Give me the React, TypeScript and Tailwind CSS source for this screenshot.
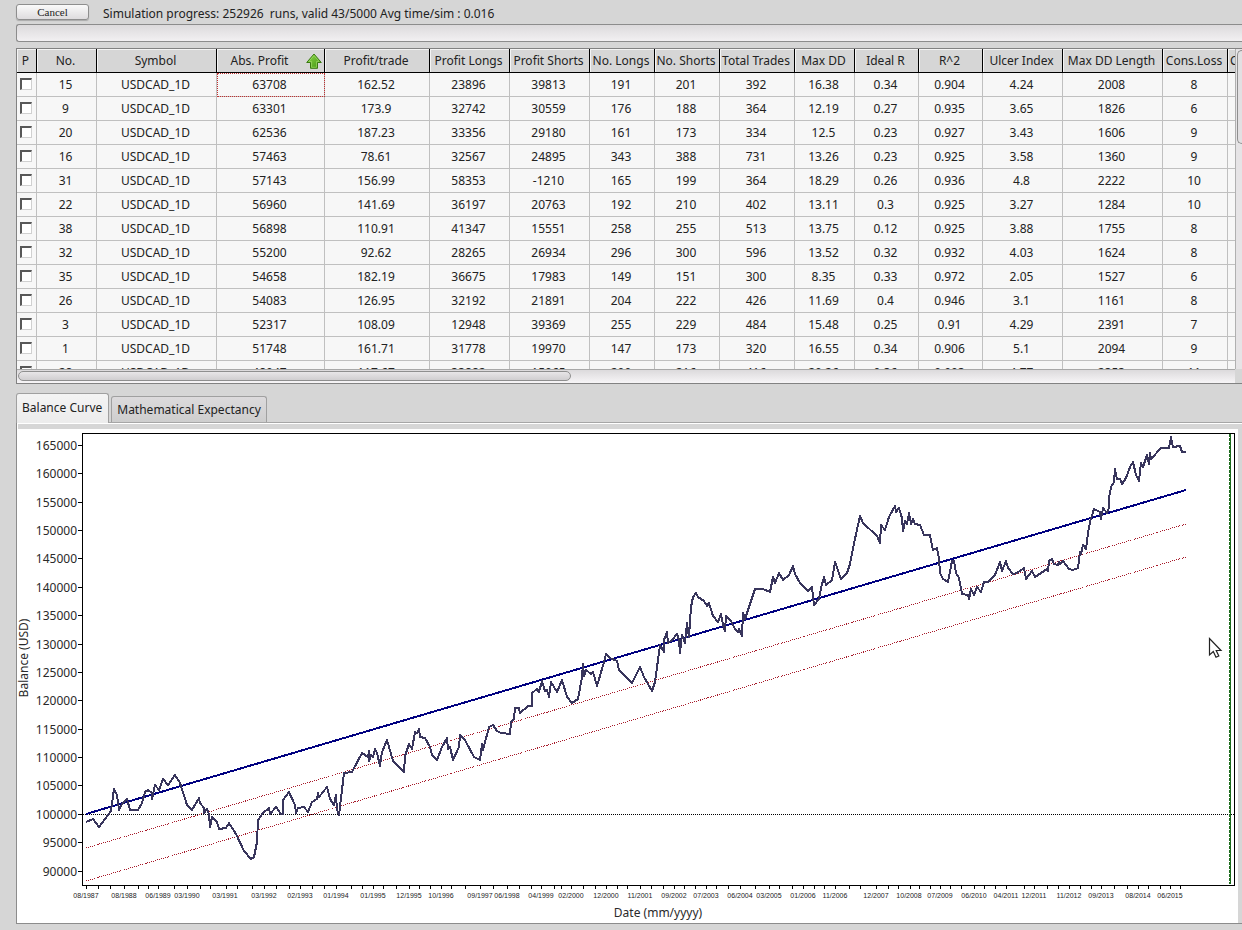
import { clsx } from "clsx"

const columns = [
  { label: "P", width: "w-[20px]" },
  { label: "No.", width: "w-[60px]" },
  { label: "Symbol", width: "w-[120px]" },
  { label: "Abs. Profit", width: "w-[108px]", sorted: true },
  { label: "Profit/trade", width: "w-[105px]" },
  { label: "Profit Longs", width: "w-[80px]" },
  { label: "Profit Shorts", width: "w-[80px]" },
  { label: "No. Longs", width: "w-[65px]" },
  { label: "No. Shorts", width: "w-[65px]" },
  { label: "Total Trades", width: "w-[75px]" },
  { label: "Max DD", width: "w-[60px]" },
  { label: "Ideal R", width: "w-[64px]" },
  { label: "R^2", width: "w-[64px]" },
  { label: "Ulcer Index", width: "w-[80px]" },
  { label: "Max DD Length", width: "w-[100px]" },
  { label: "Cons.Loss", width: "w-[65px]" },
  { label: "Cons.Wins", width: "w-[65px]" },
]

const rows = [
  ["15", "USDCAD_1D", "63708", "162.52", "23896", "39813", "191", "201", "392", "16.38", "0.34", "0.904", "4.24", "2008", "8"],
  ["9", "USDCAD_1D", "63301", "173.9", "32742", "30559", "176", "188", "364", "12.19", "0.27", "0.935", "3.65", "1826", "6"],
  ["20", "USDCAD_1D", "62536", "187.23", "33356", "29180", "161", "173", "334", "12.5", "0.23", "0.927", "3.43", "1606", "9"],
  ["16", "USDCAD_1D", "57463", "78.61", "32567", "24895", "343", "388", "731", "13.26", "0.23", "0.925", "3.58", "1360", "9"],
  ["31", "USDCAD_1D", "57143", "156.99", "58353", "-1210", "165", "199", "364", "18.29", "0.26", "0.936", "4.8", "2222", "10"],
  ["22", "USDCAD_1D", "56960", "141.69", "36197", "20763", "192", "210", "402", "13.11", "0.3", "0.925", "3.27", "1284", "10"],
  ["38", "USDCAD_1D", "56898", "110.91", "41347", "15551", "258", "255", "513", "13.75", "0.12", "0.925", "3.88", "1755", "8"],
  ["32", "USDCAD_1D", "55200", "92.62", "28265", "26934", "296", "300", "596", "13.52", "0.32", "0.932", "4.03", "1624", "8"],
  ["35", "USDCAD_1D", "54658", "182.19", "36675", "17983", "149", "151", "300", "8.35", "0.33", "0.972", "2.05", "1527", "6"],
  ["26", "USDCAD_1D", "54083", "126.95", "32192", "21891", "204", "222", "426", "11.69", "0.4", "0.946", "3.1", "1161", "8"],
  ["3", "USDCAD_1D", "52317", "108.09", "12948", "39369", "255", "229", "484", "15.48", "0.25", "0.91", "4.29", "2391", "7"],
  ["1", "USDCAD_1D", "51748", "161.71", "31778", "19970", "147", "173", "320", "16.55", "0.34", "0.906", "5.1", "2094", "9"],
  ["28", "USDCAD_1D", "48947", "117.67", "33882", "15065", "200", "216", "416", "20.26", "0.36", "0.903", "4.77", "2353", "11"],
]

const balanceTicks = [
  165000, 160000, 155000, 150000, 145000, 140000, 135000, 130000,
  125000, 120000, 115000, 110000, 105000, 100000, 95000, 90000,
]

const dateTicks = [
  86, 98, 110, 124, 138, 148, 158, 174, 187, 200, 210, 226, 237, 252, 264, 276, 289, 300, 312, 324, 336, 351,
  362, 373, 383, 396, 409, 419, 430, 441, 451, 465, 480, 493, 507, 519, 531, 541, 554, 561, 571, 583, 595, 606,
  617, 627, 640, 651, 663, 674, 684, 695, 706, 716, 728, 740, 755, 769, 779, 792, 803, 814, 824, 835, 849, 860,
  876, 888, 898, 910, 919, 930, 940, 950, 961, 974, 984, 995, 1006, 1024, 1034, 1047, 1058, 1069, 1080, 1091,
  1101, 1114, 1127, 1138, 1148, 1160, 1170, 1180,
]

const dateLabels: [number, string][] = [
  [86, "08/1987"], [124, "08/1988"], [158, "06/1989"], [187, "03/1990"], [225, "03/1991"], [264, "03/1992"],
  [300, "02/1993"], [336, "01/1994"], [373, "01/1995"], [409, "12/1995"], [441, "10/1996"], [480, "09/1997"],
  [507, "06/1998"], [541, "04/1999"], [571, "02/2000"], [606, "12/2000"], [640, "11/2001"], [674, "09/2002"],
  [706, "07/2003"], [740, "06/2004"], [769, "03/2005"], [803, "01/2006"], [835, "11/2006"], [876, "12/2007"],
  [909, "10/2008"], [940, "07/2009"], [974, "06/2010"], [1006, "04/2011"], [1034, "12/2011"], [1069, "11/2012"],
  [1101, "09/2013"], [1138, "08/2014"], [1170, "06/2015"],
]

const balanceCurve = `86,822 93,819 99,827 111,811 114,789 117,795 119,810 122,804 127,799 130,810 138,810 142,803 145,792
148,790 152,793 152,799 155,785 159,790 163,779 168,785 175,775 180,783 187,805 192,810 199,798 200,803 204,808
204,813 207,809 209,814 210,827 212,817 217,822 219,829 226,828 229,823 236,834 244,851 251,859 254,857 257,842
258,820 263,813 269,808 270,814 276,807 281,814 283,814 283,800 289,792 295,805 296,813 298,808 304,807 308,812
312,802 317,799 318,793 319,797 327,787 330,799 334,805 336,795 337,810 339,815 344,773 352,772 362,753 368,757
369,751 369,761 371,755 373,757 375,749 377,753 380,766 382,752 387,740 393,761 404,772 405,756 409,744 412,749
415,732 417,733 419,729 420,737 425,738 430,747 432,755 437,760 442,747 447,738 448,749 450,747 453,760 459,747
460,735 465,740 474,757 480,760 482,744 483,750 489,727 493,725 497,731 501,733 510,734 511,722 514,719 515,708
519,708 520,713 528,706 532,706 532,693 537,689 539,692 542,681 545,691 547,690 549,697 551,682 557,692 562,680
567,697 572,703 578,699 582,677 583,664 584,676 586,670 591,674 593,672 597,686 604,662 606,654 610,658 617,661
619,670 632,683 640,667 644,677 652,691 655,682 658,660 660,645 664,652 664,640 667,632 668,643 672,640 677,634
679,640 680,653 682,635 685,643 687,623 689,637 691,607 693,597 696,593 698,597 704,601 707,606 709,603 713,616
718,622 721,614 723,625 725,631 726,616 731,621 735,629 738,632 739,629 742,636 743,613 745,619 755,589 763,589
770,592 773,577 775,583 779,573 783,580 789,575 793,566 795,574 800,583 808,591 812,587 814,605 819,599 821,588
824,577 826,585 832,580 835,562 841,579 847,573 850,564 853,548 860,516 863,523 877,536 880,543 881,525 885,530
889,517 895,506 896,512 899,508 902,518 903,531 905,521 907,524 909,513 911,524 913,519 915,524 920,525 924,535
930,535 933,550 937,548 939,558 940,573 943,579 948,582 952,561 954,561 956,573 959,578 962,594 968,595 969,599
971,589 974,595 977,587 981,592 984,582 988,582 995,575 1000,562 1002,571 1006,561 1008,568 1013,574 1017,573
1024,568 1026,579 1032,571 1035,577 1047,569 1048,571 1049,561 1052,559 1054,564 1058,565 1059,562 1060,564
1063,561 1069,569 1073,570 1078,568 1080,552 1081,554 1083,545 1086,549 1088,533 1090,522 1094,509 1100,512
1101,519 1103,508 1107,513 1109,508 1109,498 1111,487 1114,482 1115,469 1117,479 1120,479 1122,484 1126,478
1130,467 1133,462 1136,475 1139,481 1141,463 1143,467 1147,455 1149,464 1150,453 1151,459 1161,448 1169,448
1171,437 1173,447 1180,446 1182,452 1186,452`

function SortArrow() {
  return (
    <svg viewBox="0 0 16 16" className="w-4 h-4 shrink-0" aria-hidden="true">
      <defs>
        <linearGradient id="arrow" x1="0" y1="0" x2="1" y2="1">
          <stop offset="0" stopColor="#8fd84a" />
          <stop offset="1" stopColor="#3f9410" />
        </linearGradient>
      </defs>
      <path d="M8 1 L15.3 9.5 H11.5 V15.3 H4.5 V9.5 H0.7 Z" fill="url(#arrow)" stroke="#3a7a12" strokeLinejoin="round" />
      <path d="M8 2.6 L13.2 8.5 H10.5 V14.3 H5.5 V8.5 H2.8 Z" fill="none" stroke="#a6e070" strokeOpacity="0.6" />
    </svg>
  )
}

function ResultsTable() {
  return (
    <div className="border-t border-l border-[#828282] bg-[#d6d6d6]">
      <div className="flex">
        <div className="flex-1 min-w-0 h-80 overflow-hidden bg-[#f7f7f7]">
          <table className="table-fixed border-separate border-spacing-0 w-[1276px] text-center">
            <colgroup>
              {columns.map((col) => (
                <col key={col.label} className={col.width} />
              ))}
            </colgroup>
            <thead>
              <tr className="h-6">
                {columns.map((col) => (
                  <th
                    key={col.label}
                    scope="col"
                    className="p-0 pr-0.5 h-6 font-normal leading-5 whitespace-nowrap bg-[#d6d6d6] border-r border-b border-black shadow-[inset_1px_1px_0_#f4f4f4]"
                  >
                    {col.sorted ? (
                      <button type="button" className="flex items-center w-full">
                        <span className="flex-1 pr-1">{col.label}</span>
                        <SortArrow />
                      </button>
                    ) : (
                      col.label
                    )}
                  </th>
                ))}
              </tr>
            </thead>
            <tbody>
              {rows.map((row, r) => (
                <tr key={row[0]} className="h-6">
                  <td className="p-0 pr-0.5 pb-px border-r border-b border-[#c0c0c0]">
                    <input
                      type="checkbox"
                      aria-label={`Select ${row[0]}`}
                      className="block mx-auto w-3 h-3 appearance-none bg-white border border-t-2 border-l-2 border-t-[#585858] border-l-[#585858] border-r-[#d0d0d0] border-b-[#d0d0d0]"
                    />
                  </td>
                  {row.map((value, c) => (
                    <td
                      key={c}
                      className={clsx(
                        "p-0 pr-0.5 leading-5 border-r border-b border-[#c0c0c0]",
                        r === 0 && c === 2 && "outline-1 outline-dotted -outline-offset-1 outline-[#c03030]"
                      )}
                    >
                      {value}
                    </td>
                  ))}
                  <td className="p-0 border-r border-b border-[#c0c0c0]" />
                </tr>
              ))}
            </tbody>
          </table>
        </div>

        {/* Vertical scrollbar */}
        <div className="w-[7px] pl-px pt-px bg-[#e6e4e6] border-l border-[#b0b0b0]">
          <div className="h-[94px] rounded-l-md border border-r-0 border-[#8f8f8f] bg-[#e2e0e2]" />
        </div>
      </div>

      {/* Horizontal scrollbar */}
      <div className="flex h-[15px] border-b border-[#828282]">
        <div className="flex-1 border-t border-[#a8a8a8] bg-linear-to-b from-[#dcdadc] to-[#f7f5f7] p-px">
          <div className="h-2.5 w-5/11 rounded-md border border-[#8f8f8f] bg-linear-to-b from-[#e8e6e8] to-[#d0ced0]" />
        </div>
        <div className="w-[7px]" />
      </div>
    </div>
  )
}

function BalanceChart() {
  return (
    <svg
      viewBox="17 429 1221 494"
      className="block w-full bg-white font-['Noto_Sans',sans-serif]"
      role="img"
      aria-label="Balance Curve"
    >
      <g shapeRendering="crispEdges" fill="none">
        <path d="M82.5 885.5 V433.5 H1234.5 V885.5 Z" stroke="#000" />
        {balanceTicks.map((tick, i) => (
          <path key={tick} d={`M78 ${Math.round(445 + i * 28.37) + 0.5} h4`} stroke="#000" />
        ))}
        {dateTicks.map((x) => (
          <path key={x} d={`M${x + 0.5} 886 v3`} stroke="#000" />
        ))}
        <path d="M83 814.5 H1234" stroke="#000" strokeDasharray="1 1" />
        <path d="M86 848 L1186 524" stroke="#a81c2c" strokeDasharray="1 1" />
        <path d="M86 881 L1186 557" stroke="#a81c2c" strokeDasharray="1 1" />
        <path d="M86 814 L1186 490" stroke="#000080" strokeWidth="2" />
        <polyline points={balanceCurve} stroke="#38355c" strokeWidth="2" strokeLinejoin="round" />
        <path d="M1229.5 434 V884" stroke="#1c6a1c" strokeDasharray="3 1" />
        <path d="M1230.5 434 V884" stroke="#1c6a1c" />
      </g>

      <g fill="#2a2a2a" fontSize="12" textAnchor="end">
        {balanceTicks.map((tick, i) => (
          <text key={tick} x="77" y={Math.round(450 + i * 28.37)}>
            {tick}
          </text>
        ))}
      </g>
      <g fill="#222" fontSize="7" textAnchor="middle" className="font-['Liberation_Sans',sans-serif]">
        {dateLabels.map(([x, label]) => (
          <text key={label} x={x} y="898">
            {label}
          </text>
        ))}
      </g>
      <g fill="#2a2a2a" fontSize="12" textAnchor="middle">
        <text x="658" y="917">Date (mm/yyyy)</text>
        <text transform="translate(28 658) rotate(-90)">Balance (USD)</text>
      </g>

      {/* Mouse pointer */}
      <path
        d="M1209.5 638.5 V655 L1213.3 651.5 L1216 657.2 L1218.8 656 L1216.2 650.5 H1221 Z"
        fill="#fff"
        stroke="#222"
        strokeWidth="1.2"
      />
    </svg>
  )
}

export default function App() {
  return (
    <div className="min-h-screen pl-4 bg-[#d6d6d6] text-xs text-[#222] font-['Noto_Sans',sans-serif] overflow-hidden">
      {/* Simulation status */}
      <div className="flex items-start gap-3.5 h-6 pt-1">
        <button
          type="button"
          className="w-[73px] h-4 rounded-[3px] border border-[#8e8e8e] bg-linear-to-b from-[#fafafa] to-[#dedcde] shadow-[0_1px_1px_#aaa] font-['Liberation_Serif',serif] text-[11px] leading-3"
        >
          Cancel
        </button>
        <p className="whitespace-pre leading-5">{"Simulation progress: 252926  runs, valid 43/5000 Avg time/sim : 0.016"}</p>
      </div>
      <div
        role="progressbar"
        aria-label="Simulation progress"
        className="h-[18px] mb-1.5 rounded-l-[3px] border border-r-0 border-[#8c8c8c] bg-linear-to-b from-[#dcdadc] to-[#f2f0f2]"
      />

      <ResultsTable />

      {/* Chart tabs */}
      <div role="tablist" className="flex items-end gap-0.5 mt-[9px] border-b border-[#a6a6a6]">
        <button
          type="button"
          role="tab"
          aria-selected="true"
          className="h-[30px] -mb-px pl-[5px] pr-1.5 pb-0.5 rounded-t-[3px] border border-b-0 border-[#a0a0a0] bg-linear-to-b from-[#f4f4f4] to-[#ececec] leading-5"
        >
          Balance Curve
        </button>
        <button
          type="button"
          role="tab"
          aria-selected="false"
          className="h-[26px] px-[5px] rounded-t-[3px] border border-b-0 border-[#a0a0a0] bg-linear-to-b from-[#dcdadc] to-[#cecece] leading-5"
        >
          Mathematical Expectancy
        </button>
      </div>
      <div role="tabpanel" className="border-l border-b border-[#8c8c8c]">
        <div className="h-1.5 border-t border-l border-white" />
        <div className="mr-1">
          <BalanceChart />
        </div>
      </div>
    </div>
  )
}
